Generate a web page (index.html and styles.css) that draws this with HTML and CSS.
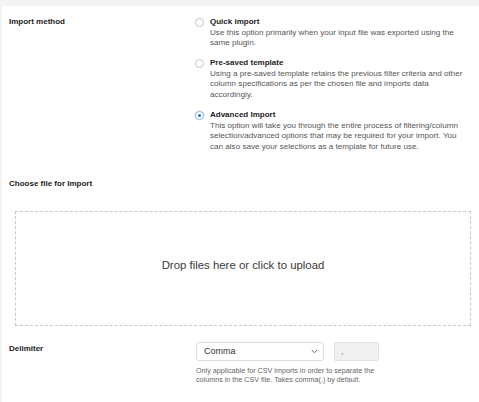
FILE: index.html
```html
<!DOCTYPE html>
<html>
<head>
<meta charset="utf-8">
<link rel="stylesheet" href="styles.css">
</head>
<body>
<div class="panel">
  <div class="row row-method">
    <div class="label">Import method</div>
    <div class="options">
      <div class="option">
        <span class="radio"></span>
        <div class="opt-body">
          <div class="opt-title">Quick import</div>
          <div class="opt-desc">Use this option primarily when your input file was exported using the<br>same plugin.</div>
        </div>
      </div>
      <div class="option">
        <span class="radio"></span>
        <div class="opt-body">
          <div class="opt-title">Pre-saved template</div>
          <div class="opt-desc">Using a pre-saved template retains the previous filter criteria and other<br>column specifications as per the chosen file and imports data<br>accordingly.</div>
        </div>
      </div>
      <div class="option">
        <span class="radio checked"></span>
        <div class="opt-body">
          <div class="opt-title">Advanced Import</div>
          <div class="opt-desc">This option will take you through the entire process of filtering/column<br>selection/advanced options that may be required for your import. You<br>can also save your selections as a template for future use.</div>
        </div>
      </div>
    </div>
  </div>

  <div class="label label-file">Choose file for Import</div>
  <div class="dropzone">Drop files here or click to upload</div>

  <div class="row row-delim">
    <div class="label label-delim">Delimiter</div>
    <div class="delim-field">
      <div class="delim-controls">
        <div class="select">
          <span>Comma</span>
          <svg class="chev" width="7" height="5" viewBox="0 0 7 5"><path d="M0.8 1 L3.5 3.8 L6.2 1" fill="none" stroke="#666" stroke-width="1"/></svg>
        </div>
        <div class="delim-input">,</div>
      </div>
      <div class="help">Only applicable for CSV imports in order to separate the<br>columns in the CSV file. Takes comma(,) by default.</div>
    </div>
  </div>
</div>
</body>
</html>
```

FILE: styles.css
```css
html, body {
  margin: 0;
  padding: 0;
}
body {
  background: #f4f4f5;
  font-family: "Liberation Sans", Arial, sans-serif;
  color: #1d2327;
}
.panel {
  margin: 6px 0 0 2px;
  background: #ffffff;
  min-height: 396px;
  padding: 11px 8px 0 7px;
  box-sizing: border-box;
}
.row {
  display: grid;
  grid-template-columns: 186px 1fr;
}
.label {
  font-size: 8px;
  font-weight: bold;
  line-height: 10.6px;
  color: #222;
}
.options {
  display: flex;
  flex-direction: column;
  gap: 9.4px;
}
.option {
  display: flex;
  align-items: flex-start;
  gap: 6px;
}
.radio {
  width: 9px;
  height: 9px;
  margin-top: 1px;
  border: 1px solid #c4c4c4;
  border-radius: 50%;
  box-sizing: border-box;
  background: #fff;
  flex: none;
  display: flex;
  align-items: center;
  justify-content: center;
}
.radio.checked {
  border-color: #9db9dc;
  box-shadow: 0 0 0 0.5px #c9dcf2;
}
.radio.checked::after {
  content: "";
  width: 3.4px;
  height: 3.4px;
  border-radius: 50%;
  background: #2a6fc0;
}
.opt-title {
  font-size: 8px;
  font-weight: bold;
  line-height: 10.6px;
  color: #222;
  white-space: nowrap;
}
.opt-desc {
  font-size: 8.1px;
  line-height: 10.6px;
  color: #555;
  white-space: nowrap;
}
.label-file {
  margin-top: 26.4px;
}
.dropzone {
  margin: 21.4px 0 0 6px;
  height: 115px;
  border: 1.5px dashed #c8c8c8;
  box-sizing: border-box;
  display: flex;
  align-items: center;
  justify-content: center;
  padding-bottom: 6px;
  font-size: 11.4px;
  color: #3a3a3a;
}
.row-delim {
  margin-top: 16px;
}
.label-delim {
  padding-top: 2px;
}
.delim-field {
  display: flex;
  flex-direction: column;
  padding-left: 1px;
}
.delim-controls {
  display: flex;
  gap: 10px;
}
.select {
  width: 128px;
  height: 19px;
  border: 1px solid #dcdcde;
  border-radius: 3px;
  box-sizing: border-box;
  display: flex;
  align-items: center;
  justify-content: space-between;
  padding: 0 5px 0 7px;
  font-size: 9px;
  color: #333;
  background: #fff;
}
.chev {
  display: block;
}
.delim-input {
  width: 45px;
  height: 19px;
  border: 1px solid #e0e0e0;
  border-radius: 2px;
  background: #f0f0f1;
  box-sizing: border-box;
  font-size: 9px;
  color: #8c8f94;
  padding: 3px 0 0 6px;
  line-height: 11px;
}
.help {
  margin-top: 6.5px;
  font-size: 7.2px;
  line-height: 8.8px;
  color: #666;
  white-space: nowrap;
}
```
